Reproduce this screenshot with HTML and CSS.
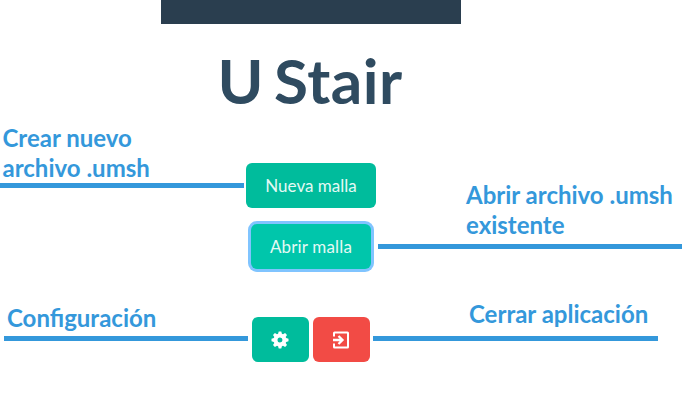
FILE: index.html
```html
<!DOCTYPE html>
<html lang="es">
<head>
<meta charset="utf-8">
<title>U Stair</title>
<link rel="stylesheet" href="styles.css">
</head>
<body>
<header class="topbar"></header>
<h1 class="title">U Stair</h1>
<main class="guide">
  <section class="notes notes-left">
    <div class="note note-new"><p>Crear nuevo<br>archivo .umsh</p></div>
    <div class="note note-config"><p>Configuración</p></div>
  </section>
  <section class="actions">
    <button class="btn btn-new">Nueva malla</button>
    <button class="btn btn-open">Abrir malla</button>
    <div class="tools">
      <button class="btn tool" aria-label="Configuración">
        <svg width="18" height="18" viewBox="0 0 18 18"><path fill="#fff" fill-rule="evenodd" d="M7.700 0.500h2.600l.6 2.300 1.100.5L14.100 2 16 3.900l-1.300 2.100.5 1.100 2.300.6v2.600l-2.300.6-.5 1.100 1.300 2.100-1.900 1.900-2.100-1.300-1.100.5-.6 2.300H7.700l-.6-2.300-1.100-.5L3.900 16 2 14.100 3.300 12l-.5-1.100-2.300-.6V7.700l2.300-.6.5-1.100L2 3.900 3.900 2 6 3.300l1.100-.5zM9 6.500a2.500 2.500 0 1 0 0 5 2.500 2.500 0 0 0 0-5z"/></svg>
      </button>
      <button class="btn tool tool-exit" aria-label="Cerrar aplicación">
        <svg width="18" height="18" viewBox="0 0 18 18"><path fill="none" stroke="#fff" stroke-width="2" stroke-linejoin="round" d="M2 5.500V2q0-.5.5-.5h13q.5 0 .5.500v14q0 .5-.5.500h-13q-.5 0-.5-.5v-3.500"/><path fill="none" stroke="#fff" stroke-width="2.300" d="M1 9h9M6.500 5l4 4-4 4"/></svg>
      </button>
    </div>
  </section>
  <section class="notes notes-right">
    <div class="note note-open"><p>Abrir archivo .umsh<br>existente</p></div>
    <div class="note note-close"><p>Cerrar aplicación</p></div>
  </section>
</main>
</body>
</html>
```
FILE: styles.css
```css
* { box-sizing: border-box; }
body {
  margin: 0;
  height: 400px;
  overflow: hidden;
  background: #fff;
  font-family: Lato, "Liberation Sans", sans-serif;
}
.topbar { width: 300px; height: 24px; margin-left: 161px; background: #2a3e4f; }
.title {
  width: 300px;
  height: 99px;
  margin: 0 0 0 160px;
  color: #2f4b60;
  font-size: 62px;
  font-weight: 700;
  line-height: 113px;
  text-align: center;
  white-space: nowrap;
  letter-spacing: 0.5px;
  word-spacing: -5.5px;
}
.guide { display: grid; grid-template-columns: 246px 130px 306px; }
.note {
  border-bottom: 5px solid #3498db;
  color: #3498db;
  font-size: 24px;
  font-weight: 700;
  line-height: 30px;
  white-space: nowrap;
}
.note p { margin: 0; }
.note-new { width: 244px; padding-left: 2.5px; }
.note-config { width: 244px; margin: 115px 0 0 4px; padding: 0 0 3px 3px; }
.notes-right { padding-top: 57px; }
.note-open { margin-left: 2px; padding: 0 0 4px 88px; }
.note-close { width: 285px; margin: 50px 0 0 -3px; padding: 0 0 7px 96px; }
.actions { display: flex; flex-direction: column; align-items: center; padding-top: 40px; }
.btn {
  display: flex;
  align-items: center;
  justify-content: center;
  height: 45px;
  padding: 0;
  border: 0;
  border-radius: 6px;
  background: #00bc9c;
  color: #e4f9f4;
  font: 17px Lato, "Liberation Sans", sans-serif;
}
.btn-new { width: 130px; }
.btn-open {
  width: 120px;
  margin-top: 16px;
  background: #00c6ab;
  box-shadow: 0 0 0 3px #80c4ff;
  letter-spacing: 0.15px;
}
.tools { display: flex; gap: 4px; margin-top: 48px; }
.tool { width: 57px; }
.tool svg { margin-right: 1px; }
.tool-exit { background: #f24b45; }
```
